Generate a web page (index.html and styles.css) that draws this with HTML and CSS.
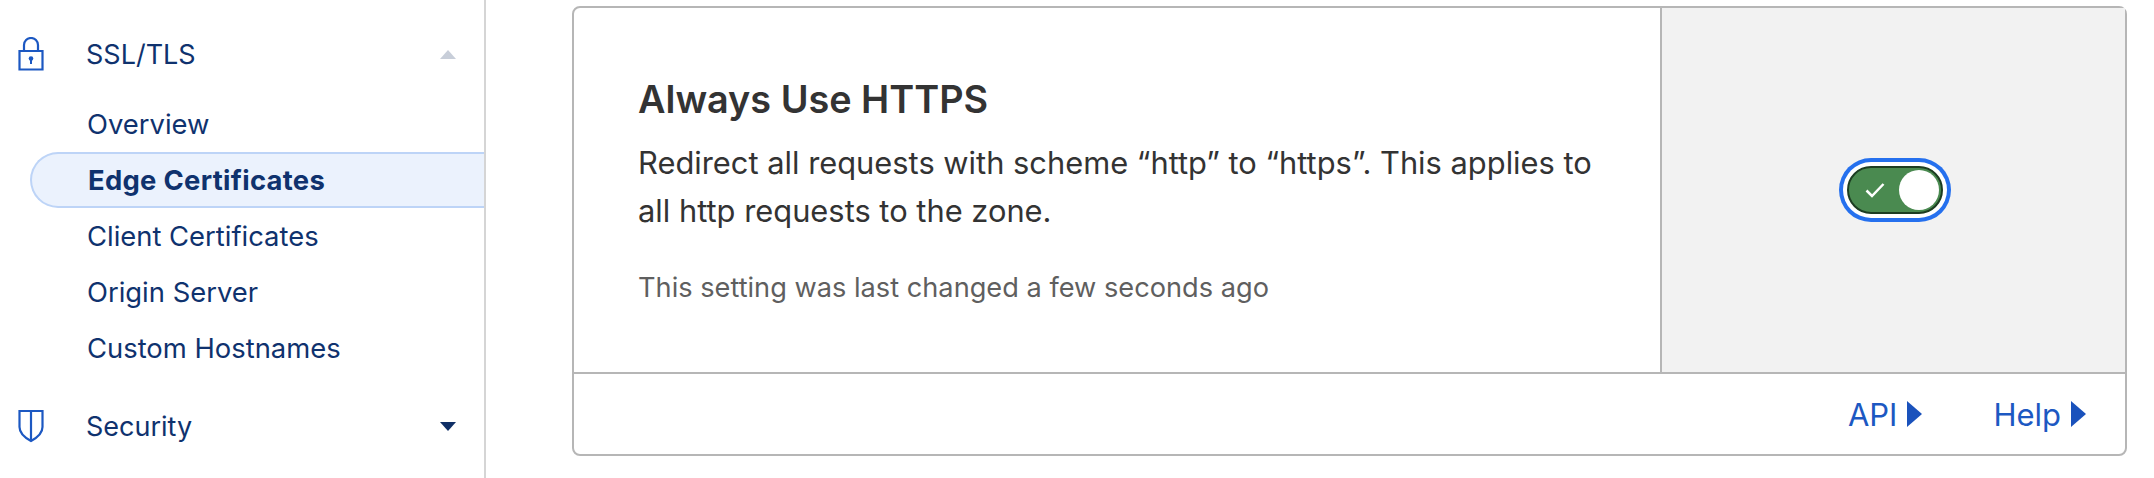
FILE: index.html
```html
<!DOCTYPE html>
<html>

<head>
  <meta charset="utf-8">
  <title>Edge Certificates</title>
  <link rel="stylesheet" href="styles.css">
</head>

<body>
  <nav class="sidebar">
    <div class="section">
      <svg class="section-icon" viewBox="0 0 26 34">
        <path d="M1.500 14h23v18.500h-23z" class="line" />
        <path d="M6 14V8a7 7 0 0 1 14 0v6" class="line" />
        <circle cx="13" cy="21.500" r="2.300" class="dot" />
        <path d="M12 22h2v5h-2z" class="dot" />
      </svg>
      <span class="section-name">SSL/TLS</span>
      <span class="caret caret-up"></span>
    </div>
    <ul class="subnav">
      <li class="subnav-item">Overview</li>
      <li class="subnav-item active">Edge Certificates</li>
      <li class="subnav-item">Client Certificates</li>
      <li class="subnav-item">Origin Server</li>
      <li class="subnav-item">Custom Hostnames</li>
    </ul>
    <div class="section section-security">
      <svg class="section-icon" viewBox="0 0 26 34">
        <path d="M1.500 2h23v16c0 6-5 10.500-11.500 14C6.500 28.500 1.500 24 1.500 18z" class="line" />
        <path d="M13 2v30" class="line" />
      </svg>
      <span class="section-name">Security</span>
      <span class="caret caret-down"></span>
    </div>
  </nav>

  <main class="content">
    <section class="card">
      <div class="card-body">
        <div class="card-text">
          <h3 class="card-title">Always Use HTTPS</h3>
          <p class="card-desc">Redirect all requests with scheme “http” to “https”. This applies to all http requests to the zone.</p>
          <p class="card-meta">This setting was last changed a few seconds ago</p>
        </div>
        <div class="card-control">
          <div class="toggle">
            <svg class="toggle-check" viewBox="0 0 20 16">
              <path d="M1.500 8.500l5.500 5.500L18.500 2" />
            </svg>
            <span class="toggle-knob"></span>
          </div>
        </div>
      </div>
      <div class="card-footer">
        <a class="card-link">API<span class="arrow"></span></a>
        <a class="card-link">Help<span class="arrow"></span></a>
      </div>
    </section>
  </main>
</body>

</html>
```

FILE: styles.css
```css
* {
  margin: 0;
  padding: 0;
  box-sizing: border-box;
}

html,
body {
  height: 478px;
  overflow: hidden;
}

body {
  display: flex;
  background: #fff;
  font-family: Inter, "Noto Sans", sans-serif;
}

/* sidebar */
.sidebar {
  width: 486px;
  height: 478px;
  flex: none;
  padding-top: 37px;
  border-right: 2px solid #d5d5d5;
  color: #0f326e;
}

.section {
  display: flex;
  align-items: center;
  height: 34px;
  padding: 0 28px 0 18px;
}

.section-security {
  margin-top: 33px;
}

.section-icon {
  width: 26px;
  height: 34px;
  flex: none;
  margin-right: 42px;
}

.section-icon .line {
  fill: none;
  stroke: #1c58c2;
  stroke-width: 2.200;
}

.section-icon .dot {
  fill: #1c58c2;
}

.section-name {
  flex: 1;
  font-size: 27px;
}

.caret {
  width: 0;
  height: 0;
  border-left: 8px solid transparent;
  border-right: 8px solid transparent;
}

.caret-up {
  border-bottom: 9px solid #c8ced9;
}

.caret-down {
  border-top: 9px solid #0f2f66;
}

.subnav {
  list-style: none;
  margin-top: 25px;
}

.subnav-item {
  height: 56px;
  line-height: 56px;
  margin-left: 30px;
  padding-left: 57px;
  font-size: 27.400px;
}

.subnav-item.active {
  background: #ebf2fd;
  border: 2px solid #bdd4f7;
  border-right: 0;
  border-radius: 28px 0 0 28px;
  padding-left: 56px;
  line-height: 52px;
  font-weight: 700;
  letter-spacing: 0.300px;
}

/* card */
.content {
  flex: 1;
  padding: 6px 27px 0 86px;
}

.card {
  height: 450px;
  display: flex;
  flex-direction: column;
  border: 2px solid #b6b6b6;
  border-radius: 8px;
  color: #333;
}

.card-body {
  flex: 1;
  display: flex;
  border-bottom: 2px solid #b6b6b6;
}

.card-text {
  flex: 1;
  padding: 71px 62px 0 64px;
}

.card-title {
  font-size: 37.800px;
  line-height: 40px;
  font-weight: 600;
}

.card-desc {
  margin-top: 20px;
  font-size: 30.850px;
  line-height: 48px;
}

.card-meta {
  margin-top: 37px;
  font-size: 27.200px;
  line-height: 32px;
  color: #5f5f5f;
}

.card-control {
  width: 465px;
  display: flex;
  align-items: center;
  justify-content: center;
  padding-left: 3px;
  background: #f2f2f2;
  border-left: 2px solid #b6b6b6;
}

.toggle {
  width: 96px;
  height: 48px;
  display: flex;
  align-items: center;
  justify-content: space-between;
  padding: 0 2px 0 16px;
  background: #4a8a50;
  border: 2px solid #1c3d22;
  border-radius: 24px;
  box-shadow: 0 0 0 4px #fff, 0 0 0 8px #2570ee;
}

.toggle-check {
  width: 20px;
  height: 16px;
  fill: none;
  stroke: #fff;
  stroke-width: 2.500;
}

.toggle-knob {
  width: 40px;
  height: 40px;
  background: #fff;
  border-radius: 50%;
}

.card-footer {
  height: 80px;
  display: flex;
  align-items: center;
  justify-content: flex-end;
  gap: 71px;
  padding-right: 39px;
}

.card-link {
  display: flex;
  align-items: center;
  gap: 10px;
  font-size: 31px;
  color: #1c58c2;
}

.arrow {
  width: 0;
  height: 0;
  border-top: 13px solid transparent;
  border-bottom: 13px solid transparent;
  border-left: 15px solid #1a52bc;
}
```
